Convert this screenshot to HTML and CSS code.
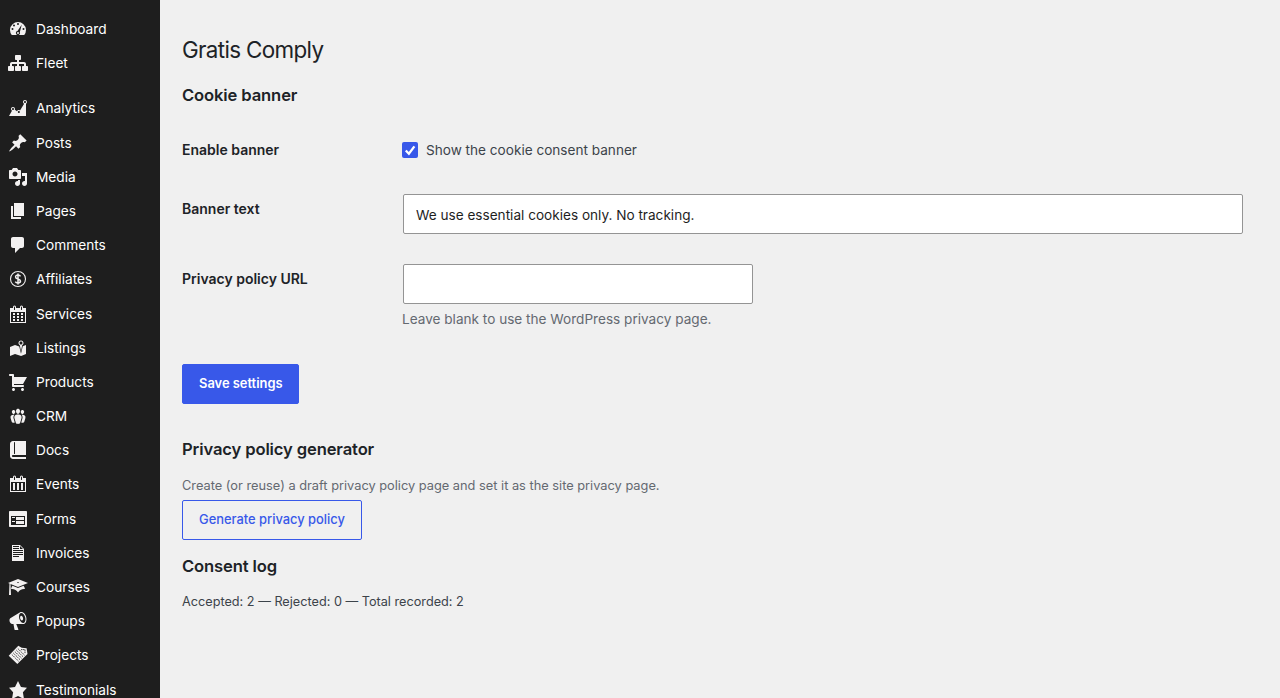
FILE: index.html
```html
<!DOCTYPE html>
<html lang="en">
<head>
  <meta charset="UTF-8">
  <meta name="viewport" content="width=device-width, initial-scale=1.0">
  <title>Gratis Comply</title>
  <link rel="stylesheet" href="styles.css">
</head>
<body>
  <nav class="sidebar">
    <ul class="menu">
      <li><a href="#"><svg class="icon" viewBox="0 0 20 20"><path fill-rule="evenodd" d="M3.760 16h12.480A8 8 0 1 0 3.760 16zM10 4a1 1 0 1 1 0 2 1 1 0 0 1 0-2zM6 5.500a1 1 0 1 1 0 2 1 1 0 0 1 0-2zM13.800 5.500L11.800 13.300a2 2 0 1 1-2.300-1.200zM4.500 9a1 1 0 1 1 0 2 1 1 0 0 1 0-2zM15.500 9a1 1 0 1 1 0 2 1 1 0 0 1 0-2z"/><circle cx="10" cy="14" r="1"/></svg>Dashboard</a></li>
      <li><a href="#"><svg class="icon" viewBox="0 0 20 20"><path d="M18 13h1c.55 0 1 .45 1 1.010v2.980c0 .56-.45 1.010-1 1.010h-4c-.55 0-1-.45-1-1.010v-2.980c0-.56.45-1.010 1-1.010h1v-2h-5v2h1c.55 0 1 .45 1 1.010v2.980c0 .56-.45 1.010-1 1.010H8c-.55 0-1-.45-1-1.010v-2.980c0-.56.45-1.010 1-1.010h1v-2H4v2h1c.55 0 1 .45 1 1.010v2.980C6 17.550 5.550 18 5 18H1c-.55 0-1-.45-1-1.010v-2.980C0 13.450.45 13 1 13h1v-2c0-1.100.9-2 2-2h5V7H8c-.55 0-1-.45-1-1.010V3.010C7 2.450 7.450 2 8 2h4c.55 0 1 .45 1 1.010v2.980C13 6.550 12.550 7 12 7h-1v2h5c1.100 0 2 .9 2 2v2z"/></svg>Fleet</a></li>
      <li class="separator"></li>
      <li><a href="#"><svg class="icon" viewBox="0 0 20 20"><path d="M18 18l.01-12.280c.59-.35.99-.99.99-1.720 0-1.100-.9-2-2-2s-2 .9-2 2c0 .8.47 1.480 1.140 1.800l-4.130 6.580c-.33-.24-.73-.38-1.160-.38-.84 0-1.550.51-1.850 1.240l-2.140-1.530c.09-.22.14-.46.14-.71 0-1.110-.89-2-2-2-1.100 0-2 .89-2 2 0 .73.4 1.360.98 1.710L1 18h17zM17 3c.55 0 1 .45 1 1s-.45 1-1 1-1-.45-1-1 .45-1 1-1zM5 10c.55 0 1 .45 1 1s-.45 1-1 1-1-.45-1-1 .45-1 1-1zm5.850 3c.55 0 1 .45 1 1s-.45 1-1 1-1-.45-1-1 .45-1 1-1z"/></svg>Analytics</a></li>
      <li><a href="#"><svg class="icon" viewBox="0 0 20 20"><path d="M10.440 3.020l1.820-1.820 6.360 6.350-1.830 1.820c-1.050-.68-2.480-.57-3.410.36l-.75.75c-.92.93-1.040 2.350-.35 3.410l-1.830 1.820-2.410-2.410-2.800 2.790c-.42.42-3.380 2.710-3.800 2.290s1.860-3.390 2.280-3.810l2.790-2.790L4.100 9.360l1.830-1.820c1.050.69 2.480.57 3.400-.36l.75-.75c.93-.92 1.050-2.350.36-3.410z"/></svg>Posts</a></li>
      <li><a href="#"><svg class="icon" viewBox="0 0 20 20"><path fill-rule="evenodd" d="M13 11V4c0-.55-.45-1-1-1h-1.670L9 1H5L3.670 3H2c-.55 0-1 .45-1 1v7c0 .55.45 1 1 1h10c.55 0 1-.45 1-1zM7 4.500c1.380 0 2.500 1.120 2.500 2.500S8.380 9.500 7 9.500 4.500 8.380 4.500 7 5.620 4.500 7 4.500zM14 6h5v10.500c0 1.380-1.120 2.500-2.500 2.500S14 17.880 14 16.500s1.120-2.500 2.500-2.500c.17 0 .34.02.5.05V9h-3V6zm-4 8.050V13h2v3.500c0 1.380-1.120 2.500-2.500 2.500S7 17.880 7 16.500 8.120 14 9.500 14c.17 0 .34.02.5.05z"/></svg>Media</a></li>
      <li><a href="#"><svg class="icon" viewBox="0 0 20 20"><path d="M6 15V2h10v13H6zm-1 1h8v2H3V5h2v11z"/></svg>Pages</a></li>
      <li><a href="#"><svg class="icon" viewBox="0 0 20 20"><path d="M5 2h9c1.100 0 2 .9 2 2v7c0 1.100-.9 2-2 2h-2l-5 5v-5H5c-1.100 0-2-.9-2-2V4c0-1.100.9-2 2-2z"/></svg>Comments</a></li>
      <li><a href="#"><svg class="icon icon-line" viewBox="0 0 20 20"><circle cx="10" cy="10" r="7.500"/><path d="M12.500 7.300C12 6.400 11.200 6 10 6c-1.400 0-2.400.7-2.400 1.900 0 2.700 4.900 1.400 4.900 4.200 0 1.200-1 1.900-2.500 1.900-1.300 0-2.200-.4-2.700-1.400M10 4.500v11" stroke-width="1.500"/></svg>Affiliates</a></li>
      <li><a href="#"><svg class="icon" viewBox="0 0 20 20"><path fill-rule="evenodd" d="M15 4h3v15H2V4h3V3a1.500 1.500 0 0 1 3 0v1h4V3a1.500 1.500 0 0 1 3 0zM6 3v2.500a.5.5 0 0 0 1 0V3a.5.5 0 0 0-1 0zm7 0v2.500a.5.5 0 0 0 1 0V3a.5.5 0 0 0-1 0zm4 15V8H3v10h14zM7 9v2H5V9h2zm2 0h2v2H9V9zm4 2V9h2v2h-2zm-6 1v2H5v-2h2zm2 0h2v2H9v-2zm4 2v-2h2v2h-2zm-6 1v2H5v-2h2zm4 2H9v-2h2v2zm4 0h-2v-2h2v2z"/></svg>Services</a></li>
      <li><a href="#"><svg class="icon" viewBox="0 0 20 20"><path fill-rule="evenodd" d="M13 13.140l1.170-5.940c.79-.43 1.330-1.250 1.330-2.200 0-1.380-1.120-2.500-2.500-2.500S10.500 3.620 10.500 5c0 .95.54 1.770 1.330 2.200zm0-9.640c.83 0 1.500.67 1.500 1.500s-.67 1.500-1.500 1.500-1.500-.67-1.500-1.500.67-1.500 1.500-1.500zm1.720 4.800L18 6.970v9L13.120 18 7 15.970l-5 2v-9l5-2 4.270 1.410 1.730 7.300z"/></svg>Listings</a></li>
      <li><a href="#"><svg class="icon" viewBox="0 0 20 20"><path d="M6 13h9c.55 0 1 .45 1 1s-.45 1-1 1H5c-.55 0-1-.45-1-1V4H2c-.55 0-1-.45-1-1s.45-1 1-1h3c.55 0 1 .45 1 1v2h13l-4 7H6v1zm-.5 3c.83 0 1.500.67 1.500 1.500S6.330 19 5.500 19 4 18.330 4 17.500 4.670 16 5.500 16zm9 0c.83 0 1.500.67 1.500 1.500s-.67 1.500-1.500 1.500-1.500-.67-1.500-1.500.67-1.500 1.500-1.500z"/></svg>Products</a></li>
      <li><a href="#"><svg class="icon" viewBox="0 0 20 20"><path d="M8.030 4.460c-.29 1.280.55 3.460 1.970 3.460 1.410 0 2.250-2.180 1.960-3.460-.22-.98-1.080-1.630-1.960-1.630-.89 0-1.740.65-1.970 1.630zm-4.130.9c-.25 1.080.47 2.930 1.670 2.930s1.920-1.850 1.670-2.930c-.19-.83-.92-1.390-1.670-1.390s-1.480.56-1.670 1.390zm8.860 0c-.25 1.080.47 2.930 1.660 2.930 1.200 0 1.920-1.850 1.670-2.930-.19-.83-.92-1.390-1.670-1.390-.74 0-1.470.56-1.660 1.390zm-.59 11.430l1.250-4.300C14.200 10 12.710 8.470 10 8.470c-2.720 0-4.210 1.530-3.440 4.020l1.260 4.300C8.050 17.510 9 18 10 18c.98 0 1.940-.49 2.170-1.210zm-6.100-7.630c-.49.67-.96 1.830-.42 3.590l1.120 3.790c-.34.2-.77.31-1.200.31-.85 0-1.650-.41-1.850-1.030l-1.070-3.650c-.65-2.110.61-3.400 2.920-3.400.27 0 .54.02.79.06-.1.1-.2.22-.29.33zm8.350-.39c2.310 0 3.580 1.290 2.920 3.400l-1.070 3.650c-.2.62-1 1.030-1.850 1.030-.43 0-.86-.11-1.200-.31l1.110-3.770c.55-1.780.08-2.940-.42-3.610-.08-.11-.18-.23-.28-.33.25-.04.51-.06.79-.06z"/></svg>CRM</a></li>
      <li><a href="#"><svg class="icon" viewBox="0 0 20 20"><path fill-rule="evenodd" d="M5 17h13v2H5c-1.660 0-3-1.340-3-3V4c0-1.660 1.340-3 3-3h13v14H5c-.55 0-1 .45-1 1s.45 1 1 1zm2-3.500v-11a.5.5 0 0 0-1 0v11a.5.5 0 0 0 1 0z"/></svg>Docs</a></li>
      <li><a href="#"><svg class="icon" viewBox="0 0 20 20"><path fill-rule="evenodd" d="M15 4h3v14H2V4h3V3a1.500 1.500 0 0 1 3 0v1h4V3a1.500 1.500 0 0 1 3 0zM6 3v2.500a.5.5 0 0 0 1 0V3a.5.5 0 0 0-1 0zm7 0v2.500a.5.5 0 0 0 1 0V3a.5.5 0 0 0-1 0zm4 14V8H3v9h14zM7 16V9H5v7h2zm4 0V9H9v7h2zm4 0V9h-2v7h2z"/></svg>Events</a></li>
      <li><a href="#"><svg class="icon" viewBox="0 0 20 20"><path fill-rule="evenodd" d="M2 2h16c.55 0 1 .45 1 1v14c0 .55-.45 1-1 1H2c-.55 0-1-.45-1-1V3c0-.55.45-1 1-1zm15 14V7H3v9h14zM4 8v1h3V8H4zm4 0v3h8V8H8zm-4 4v1h3v-1H4zm4 0v3h8v-3H8z"/></svg>Forms</a></li>
      <li><a href="#"><svg class="icon" viewBox="0 0 20 20"><path fill-rule="evenodd" d="M12 2l4 4v12H4V2h8zM5 3v1h6V3H5zm7 3h3l-3-3v3zM5 5v1h6V5H5zm10 3V7H5v1h10zm0 2V9H5v1h10zm0 2v-1H5v1h10zm-4 2v-1H5v1h6z"/></svg>Invoices</a></li>
      <li><a href="#"><svg class="icon" viewBox="0 0 20 20"><path fill-rule="evenodd" d="M10 10L2.540 7.020 3 18H1l.48-11.410L0 6l10-4 10 4zm0-5c-.55 0-1 .22-1 .5s.45.5 1 .5 1-.22 1-.5-.45-.5-1-.5zm0 6l5.570-2.230c.71.94 1.200 2.070 1.360 3.300-.3-.04-.61-.07-.93-.07-2.550 0-4.780 1.370-6 3.410C8.780 13.370 6.550 12 4 12c-.32 0-.63.03-.93.07.16-1.230.65-2.360 1.360-3.300z"/></svg>Courses</a></li>
      <li><a href="#"><svg class="icon" viewBox="0 0 20 20"><path fill-rule="evenodd" d="M18.150 5.940c.46 1.620.38 3.220-.02 4.480-.42 1.280-1.260 2.180-2.300 2.480-.16.06-.26.06-.4.06-.06.02-.12.02-.18.02-.06.02-.14.02-.22.02h-6.800l2.220 5.500c.02.14-.06.26-.14.34-.08.1-.24.16-.34.16H6.950c-.1 0-.26-.06-.34-.16-.08-.08-.16-.2-.14-.34l-1-5.500H4.250l-.02-.02c-.5.06-1.080-.18-1.540-.62s-.88-1.080-1.060-1.880c-.24-.8-.2-1.560-.02-2.200.18-.62.58-1.080 1.060-1.300l.02-.02 9-5.400c.1-.06.18-.1.24-.16.06-.04.14-.08.24-.12.16-.08.28-.12.5-.18 1.040-.3 2.240.1 3.220.98s1.840 2.240 2.260 3.860zm-2.580 5.980h-.02c.4-.1.74-.34 1.040-.7.58-.7.86-1.760.86-3.040 0-.64-.1-1.300-.28-1.980-.34-1.360-1.020-2.500-1.780-3.240s-1.680-1.100-2.460-.88c-.82.22-1.400.96-1.700 2-.32 1.040-.28 2.360.06 3.720.38 1.360 1 2.500 1.800 3.240.78.74 1.620 1.100 2.480.88zm-2.540-7.080c.22-.04.42-.02.62.04.38.16.76.48 1.020 1s.42 1.200.42 1.780c0 .3-.04.56-.12.8-.18.48-.44.84-.86.94-.34.1-.8-.06-1.140-.4s-.64-.86-.78-1.500c-.18-.62-.12-1.240.02-1.720s.48-.84.82-.94z"/></svg>Popups</a></li>
      <li><a href="#"><svg class="icon" viewBox="0 0 20 20"><path d="M10.300.8L.7 10.700l8.600 8.300L19.500 9 18.600 3.200 13.700 2.800z"/><path class="cut" d="M8.300 5l6.900 6.900M6.800 6.500l6.900 6.900M5.300 8l6.900 6.900M3.800 9.500l6.900 6.900M9.800 3.500l6.900 6.900"/><path class="cut" d="M13 4.600h4v4"/></svg>Projects</a></li>
      <li><a href="#"><svg class="icon" viewBox="0 0 20 20"><path d="M10 1l3 6 6 .75-4.120 4.620L16 19l-6-3-6 3 1.130-6.630L1 7.750 7 7z"/></svg>Testimonials</a></li>
    </ul>
  </nav>

  <main class="wrap">
    <h1>Gratis Comply</h1>

    <h2>Cookie banner</h2>
    <form class="settings">
      <div class="form-row row-check">
        <span class="form-label">Enable banner</span>
        <label class="check">
          <svg class="checkbox" viewBox="0 0 16 16"><rect width="16" height="16" rx="2"/><path d="M3.800 8.500l3.100 3.300 5.500-7.400"/></svg>
          Show the cookie consent banner
        </label>
      </div>
      <div class="form-row row-text">
        <label class="form-label" for="banner-text">Banner text</label>
        <input class="input large" type="text" id="banner-text" value="We use essential cookies only. No tracking.">
      </div>
      <div class="form-row row-url">
        <label class="form-label" for="privacy-url">Privacy policy URL</label>
        <div>
          <input class="input regular" type="text" id="privacy-url">
          <p class="description">Leave blank to use the WordPress privacy page.</p>
        </div>
      </div>
      <button class="button primary" type="button">Save settings</button>
    </form>

    <h2>Privacy policy generator</h2>
    <p class="hint">Create (or reuse) a draft privacy policy page and set it as the site privacy page.</p>
    <button class="button secondary" type="button">Generate privacy policy</button>

    <h2 class="log-title">Consent log</h2>
    <p class="log">Accepted: 2 — Rejected: 0 — Total recorded: 2</p>
  </main>
</body>
</html>
```
FILE: styles.css
```css
* {
  box-sizing: border-box;
}
body {
  display: flex;
  margin: 0;
  height: 100vh;
  overflow: hidden;
  font-family: Inter, sans-serif;
  font-size: 12.8px;
  color: #3c434a;
  background-color: #f0f0f0;
}
h1, h2, p {
  margin: 0;
}
.sidebar {
  flex: none;
  width: 160px;
  background-color: #1e1e1e;
}
.menu {
  list-style: none;
  margin: 0;
  padding: 11.95px 0 0;
}
.menu a {
  display: flex;
  align-items: center;
  gap: 8px;
  height: 34.2px;
  padding-left: 8px;
  color: #fff;
  font-size: 13.7px;
  line-height: 18px;
  text-decoration: none;
}
.separator {
  height: 11px;
}
.icon {
  flex: none;
  width: 20px;
  height: 20px;
  fill: #f3f1f1;
}
.icon-line {
  fill: none;
  stroke: #f3f1f1;
  stroke-width: 1.1;
}
.cut {
  fill: none;
  stroke: #1e1e1e;
  stroke-width: 0.8;
  stroke-dasharray: 1.5 0.5;
}
.wrap {
  flex: 1;
  padding: 35px 37px 0 22px;
}
h1 {
  font-size: 22.4px;
  font-weight: 400;
  line-height: 30px;
  letter-spacing: -0.65px;
  color: #1d2327;
}
h2 {
  font-size: 16.6px;
  font-weight: 600;
  line-height: 24px;
  letter-spacing: -0.13px;
  color: #1d2327;
}
h1 + h2 {
  margin-top: 18px;
}
.form-row {
  display: grid;
  grid-template-columns: 221px 1fr;
  align-items: start;
}
.form-label {
  font-size: 14px;
  font-weight: 600;
  line-height: 18px;
  color: #1d2327;
}
.row-check {
  margin-top: 34px;
}
.row-text {
  margin-top: 35px;
}
.row-url {
  margin-top: 30px;
}
.row-text .form-label,
.row-url .form-label {
  padding-top: 6px;
}
.check {
  display: flex;
  gap: 8px;
  margin-left: -1px;
  font-size: 13.6px;
  line-height: 18px;
}
.checkbox {
  width: 16px;
  height: 16px;
  margin-top: 1px;
  fill: #3858e9;
}
.checkbox path {
  fill: none;
  stroke: #fff;
  stroke-width: 2.3;
}
.input {
  display: block;
  height: 40px;
  padding: 1px 12px 0;
  border: 1px solid #949494;
  border-radius: 2px;
  background-color: #fff;
  color: #1e1e1e;
  font-family: inherit;
  font-size: 13.6px;
}
.large {
  width: 100%;
}
.regular {
  width: 350px;
}
.description {
  margin: 5px 0 0 -1px;
  font-size: 13.6px;
  line-height: 20px;
  color: #646970;
}
.button {
  display: block;
  height: 40px;
  padding: 0 16px 2px;
  border: 1px solid #3858e9;
  border-radius: 2px;
  font-family: inherit;
  font-size: 12.9px;
  white-space: nowrap;
}
.primary {
  width: 117px;
  margin: 35px 0 33px;
  background-color: #3858e9;
  color: #fff;
  font-weight: 600;
}
.secondary {
  width: 180px;
  margin-top: 4px;
  background-color: transparent;
  color: #3858e9;
  font-weight: 500;
}
.hint {
  margin-top: 15px;
  line-height: 20px;
  color: #646970;
}
.log-title {
  margin-top: 14px;
}
.log {
  margin-top: 14px;
  font-size: 12.7px;
  line-height: 20px;
}
```
